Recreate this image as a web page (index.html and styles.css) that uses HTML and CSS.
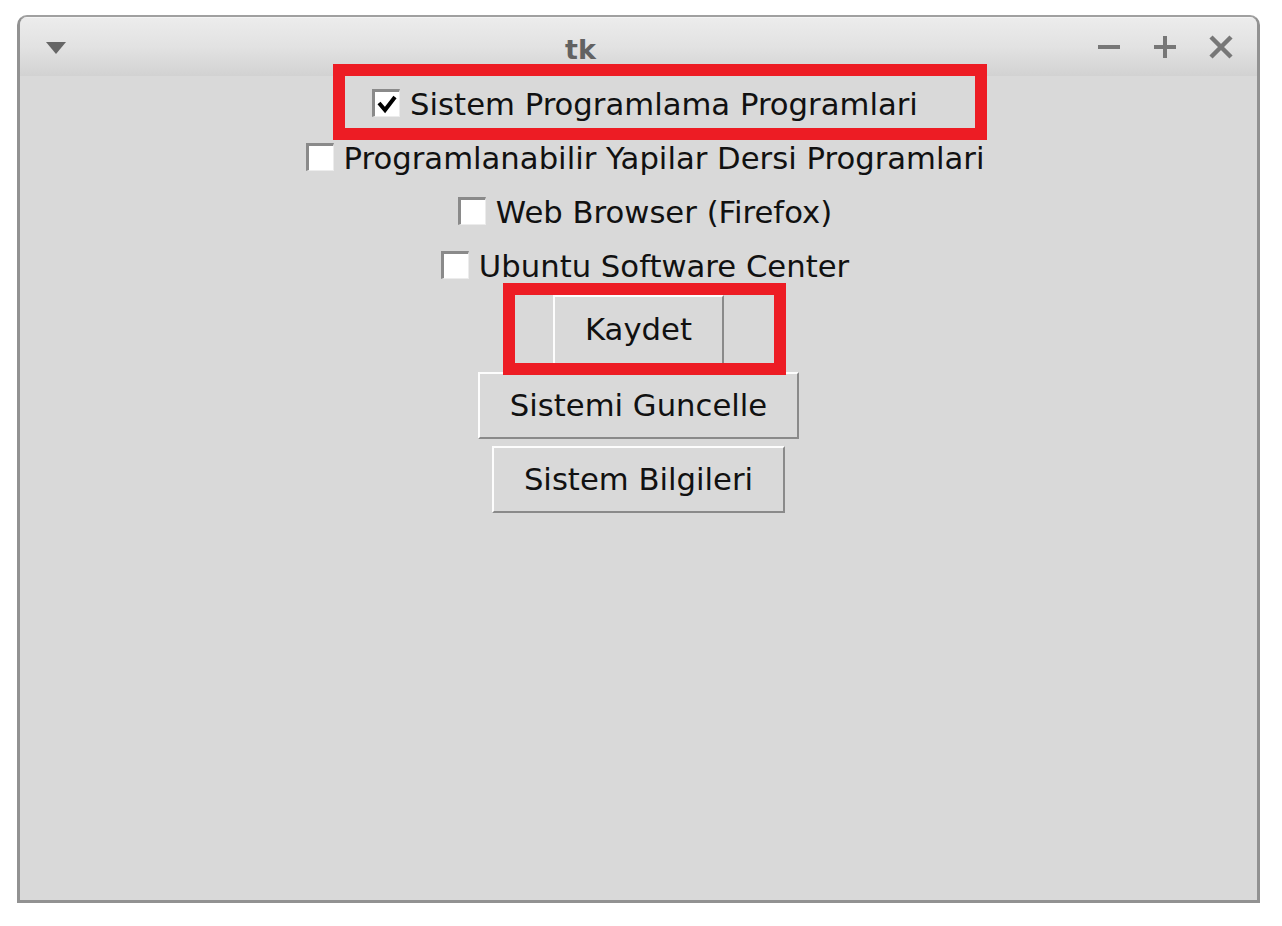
FILE: index.html
```html
<!DOCTYPE html>
<html>
<head>
<meta charset="utf-8">
<title>tk</title>
<link rel="stylesheet" href="styles.css">
</head>
<body>
<div class="window">
  <div class="titlebar">
    <div class="tb-left">
      <svg class="tri" width="22" height="14" viewBox="0 0 22 14"><path d="M1 1 L21 1 L11 13 Z" fill="#666"/></svg>
    </div>
    <div class="title">tk</div>
    <div class="tb-right">
      <svg width="24" height="24" viewBox="0 0 24 24"><path d="M1 12 H23" stroke="#777" stroke-width="4"/></svg>
      <svg width="24" height="24" viewBox="0 0 24 24"><path d="M1 12 H23 M12 1 V23" stroke="#777" stroke-width="4"/></svg>
      <svg width="24" height="24" viewBox="0 0 24 24"><path d="M2 2 L22 22 M22 2 L2 22" stroke="#777" stroke-width="4.5"/></svg>
    </div>
  </div>
  <div class="content">
    <label class="check">
      <span class="box"><svg width="22" height="22" viewBox="0 0 22 22"><path d="M3 10 L9 17 L19 4" stroke="#000" stroke-width="4" fill="none"/></svg></span>
      <span class="label">Sistem Programlama Programlari</span>
    </label>
    <label class="check">
      <span class="box"></span>
      <span class="label">Programlanabilir Yapilar Dersi Programlari</span>
    </label>
    <label class="check">
      <span class="box"></span>
      <span class="label">Web Browser (Firefox)</span>
    </label>
    <label class="check">
      <span class="box"></span>
      <span class="label">Ubuntu Software Center</span>
    </label>
    <div class="buttons">
      <button class="btn btn-save">Kaydet</button>
      <button class="btn">Sistemi Guncelle</button>
      <button class="btn">Sistem Bilgileri</button>
    </div>
  </div>
</div>
<div class="mark mark1"></div>
<div class="mark mark2"></div>
</body>
</html>
```
FILE: styles.css
```css
html, body {
  margin: 0;
  padding: 0;
  background: #ffffff;
}
body {
  position: relative;
  width: 1282px;
  height: 926px;
  font-family: "DejaVu Sans", "Liberation Sans", sans-serif;
}
.window {
  position: absolute;
  left: 17px;
  top: 15px;
  width: 1243px;
  height: 888px;
  box-sizing: border-box;
  border: 3px solid #929292;
  border-top: 2px solid #a0a0a0;
  border-radius: 10px 10px 0 0;
  background: #d9d9d9;
  display: flex;
  flex-direction: column;
  overflow: hidden;
}
.titlebar {
  height: 59px;
  flex: none;
  display: flex;
  align-items: center;
  background: linear-gradient(#ececec, #e2e2e2 50%, #d2d2d2);
  border-top: 1px solid #f4f4f4;
  box-sizing: border-box;
}
.tb-left {
  width: 60px;
  display: flex;
  align-items: center;
  padding-left: 25px;
  box-sizing: border-box;
}
.tri {
  display: block;
  margin-top: 2px;
}
.title {
  flex: 1;
  text-align: center;
  font-weight: bold;
  font-size: 27px;
  color: #626262;
  padding-top: 4px;
  padding-left: 4px;
}
.tb-right {
  width: 180px;
  display: flex;
  align-items: center;
  gap: 32px;
  padding-left: 20px;
  box-sizing: border-box;
}
.tb-right svg {
  display: block;
}
.content {
  display: flex;
  flex-direction: column;
  align-items: center;
}
.check {
  height: 54px;
  display: flex;
  align-items: center;
  gap: 10px;
  padding-left: 13px;
  font-size: 30.7px;
  color: #111;
}
.label {
  padding-top: 2px;
}
.box {
  width: 28px;
  height: 28px;
  box-sizing: border-box;
  background: #ffffff;
  border-top: 3px solid #8a8a8a;
  border-left: 3px solid #8a8a8a;
  border-right: 1px solid #ececec;
  border-bottom: 1px solid #ececec;
  display: flex;
  align-items: center;
  justify-content: center;
}
.box svg {
  display: block;
}
.buttons {
  margin-top: 3px;
  display: flex;
  flex-direction: column;
  align-items: center;
  gap: 7px;
}
.btn {
  height: 67px;
  box-sizing: border-box;
  padding: 0 30px;
  font-family: "DejaVu Sans", "Liberation Sans", sans-serif;
  font-size: 30.7px;
  color: #111;
  background: #d9d9d9;
  border-style: solid;
  border-width: 2px;
  border-color: #fdfdfd #8a8a8a #8a8a8a #fdfdfd;
}
.btn-save {
  height: 70px;
  padding-bottom: 1px;
}
.mark {
  position: absolute;
  box-sizing: border-box;
  border: 12px solid #ed1c24;
}
.mark1 {
  left: 333px;
  top: 64px;
  width: 654px;
  height: 76px;
}
.mark2 {
  left: 503px;
  top: 283px;
  width: 283px;
  height: 92px;
}
```
